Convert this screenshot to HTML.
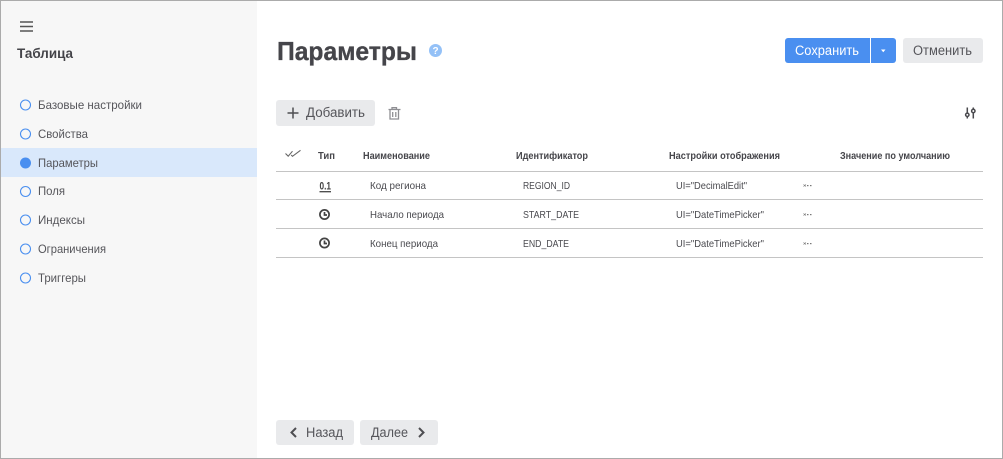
<!DOCTYPE html>
<html><head><meta charset="utf-8"><title>Параметры</title>
<style>
html,body{margin:0;padding:0;background:#fff;width:1003px;height:459px;overflow:hidden}
svg{display:block}
text{font-family:"Liberation Sans",sans-serif;fill:#4a4a4f}
.n{font-size:12px;fill:#55555a}
.c{font-size:10.5px;fill:#4a4a4f}
.h{font-size:10.5px;font-weight:bold;fill:#46464b}
.b{font-size:13.5px;fill:#55555a}
</style></head><body>
<svg width="1003" height="459" viewBox="0 0 1003 459" xmlns="http://www.w3.org/2000/svg">
<rect width="1003" height="459" fill="#fff"/>
<rect x="1" y="1" width="256" height="457" fill="#f7f7f7"/>
<rect x="1" y="148" width="256" height="29" fill="#d9e8fb"/>
<rect x="0.5" y="0.5" width="1002" height="458" fill="none" stroke="#ababab"/>
<!-- hamburger -->
<path d="M20 22h13M20 26.500h13M20 31h13" stroke="#555" stroke-width="1.500" fill="none"/>
<text x="17" y="58" textLength="56" lengthAdjust="spacingAndGlyphs" style="font-size:14px;font-weight:bold;fill:#444449">Таблица</text>
<!-- nav -->
<g fill="none" stroke="#4a8ff0" stroke-width="1.100">
<circle cx="25.500" cy="105" r="5"/><circle cx="25.500" cy="134" r="5"/>
<circle cx="25.500" cy="191.500" r="5"/><circle cx="25.500" cy="220" r="5"/>
<circle cx="25.500" cy="249" r="5"/><circle cx="25.500" cy="278" r="5"/>
</g>
<circle cx="25.500" cy="163" r="5.500" fill="#4a8ff0"/>
<text class="n" x="38" y="109" textLength="104" lengthAdjust="spacingAndGlyphs">Базовые настройки</text>
<text class="n" x="38" y="138" textLength="50" lengthAdjust="spacingAndGlyphs">Свойства</text>
<text class="n" x="38" y="167" textLength="60" lengthAdjust="spacingAndGlyphs">Параметры</text>
<text class="n" x="38" y="195" textLength="27" lengthAdjust="spacingAndGlyphs">Поля</text>
<text class="n" x="38" y="224" textLength="47" lengthAdjust="spacingAndGlyphs">Индексы</text>
<text class="n" x="38" y="253" textLength="68" lengthAdjust="spacingAndGlyphs">Ограничения</text>
<text class="n" x="38" y="282" textLength="48" lengthAdjust="spacingAndGlyphs">Триггеры</text>
<!-- title -->
<text x="277" y="60" textLength="140" lengthAdjust="spacingAndGlyphs" style="font-size:26px;font-weight:bold;fill:#45454a;stroke:#45454a;stroke-width:.35">Параметры</text>
<circle cx="435.500" cy="50.500" r="6.500" fill="#94c1f7"/>
<text x="435.500" y="54" text-anchor="middle" style="font-size:10px;font-weight:bold;fill:#fff">?</text>
<!-- top buttons -->
<path d="M788 38h82v25h-82a3 3 0 0 1-3-3v-19a3 3 0 0 1 3-3z" fill="#4a8ff0"/>
<path d="M871 38h22a3 3 0 0 1 3 3v19a3 3 0 0 1-3 3h-22z" fill="#4a8ff0"/>
<text x="795" y="55" textLength="64" lengthAdjust="spacingAndGlyphs" style="font-size:13.500px;fill:#fff">Сохранить</text>
<path d="M881 49.500h4.500l-2.250 2.700z" fill="#fff"/>
<rect x="903" y="38" width="80" height="25" rx="3" fill="#e9eaec"/>
<text class="b" x="913" y="55" textLength="59" lengthAdjust="spacingAndGlyphs">Отменить</text>
<!-- toolbar -->
<rect x="276" y="100" width="99" height="26" rx="3" fill="#e9eaec"/>
<path d="M293 107.500v11M287.500 113h11" stroke="#4e4e52" stroke-width="1.500" fill="none"/>
<text class="b" x="306" y="117" textLength="59" lengthAdjust="spacingAndGlyphs">Добавить</text>
<g fill="none" stroke="#8f8f93" stroke-width="1.300">
<path d="M388.500 109.500h12M392 109.500v-1.800h4.500v1.800M390 109.500v9.500h8.500v-9.500M392.700 112v5M395.800 112v5"/>
</g>
<g fill="none" stroke="#4a4a4e">
<path d="M967.300 107.500v11M973.300 107.500v11" stroke-width="1.500"/>
<circle cx="967.300" cy="114.800" r="1.700" fill="#fff" stroke-width="1.500"/>
<circle cx="973.300" cy="111" r="1.700" fill="#fff" stroke-width="1.500"/>
</g>
<!-- table header -->
<path d="M285.500 153.500l2.700 2.700 4.300-5M291.200 155l1.300 1.300 8-6" fill="none" stroke="#666" stroke-width="1.100"/>
<text class="h" x="318" y="159" textLength="17" lengthAdjust="spacingAndGlyphs">Тип</text>
<text class="h" x="363" y="159" textLength="67" lengthAdjust="spacingAndGlyphs">Наименование</text>
<text class="h" x="516" y="159" textLength="72" lengthAdjust="spacingAndGlyphs">Идентификатор</text>
<text class="h" x="669" y="159" textLength="111" lengthAdjust="spacingAndGlyphs">Настройки отображения</text>
<text class="h" x="840" y="159" textLength="110" lengthAdjust="spacingAndGlyphs">Значение по умолчанию</text>
<path d="M276 171.500h707M276 199.500h707M276 228.500h707M276 257.500h707" stroke="#c4c4c4" stroke-width="1" fill="none"/>
<!-- rows -->
<text x="319.500" y="189.500" textLength="11.500" lengthAdjust="spacingAndGlyphs" style="font-size:11px;font-weight:bold;fill:#444">0.1</text>
<path d="M319.500 191.700h11.500" stroke="#444" stroke-width="1.300"/>
<g fill="none" stroke="#444" stroke-width="1.700">
<circle cx="324.500" cy="214.500" r="4.600"/><path d="M324.500 212v3h2.500"/>
<circle cx="324.500" cy="243" r="4.600"/><path d="M324.500 240.500v3h2.500"/>
</g>
<text class="c" x="370" y="189" textLength="56" lengthAdjust="spacingAndGlyphs">Код региона</text>
<text class="c" x="370" y="218" textLength="74" lengthAdjust="spacingAndGlyphs">Начало периода</text>
<text class="c" x="370" y="247" textLength="68" lengthAdjust="spacingAndGlyphs">Конец периода</text>
<text class="c" x="523" y="189" textLength="47" lengthAdjust="spacingAndGlyphs">REGION_ID</text>
<text class="c" x="523" y="218" textLength="56" lengthAdjust="spacingAndGlyphs">START_DATE</text>
<text class="c" x="523" y="247" textLength="46" lengthAdjust="spacingAndGlyphs">END_DATE</text>
<text class="c" x="676" y="189" textLength="71" lengthAdjust="spacingAndGlyphs">UI="DecimalEdit"</text>
<text class="c" x="676" y="218" textLength="88" lengthAdjust="spacingAndGlyphs">UI="DateTimePicker"</text>
<text class="c" x="676" y="247" textLength="88" lengthAdjust="spacingAndGlyphs">UI="DateTimePicker"</text>
<g fill="#777">
<path d="M803.500 184.500l2.500 2M806 184.500l-2.500 2M803.500 213.500l2.500 2M806 213.500l-2.500 2M803.500 242.500l2.500 2M806 242.500l-2.500 2" stroke="#777" stroke-width=".7"/>
<rect x="807" y="185" width="1.500" height="1.200"/><rect x="810" y="185" width="1.500" height="1.200"/>
<rect x="807" y="214" width="1.500" height="1.200"/><rect x="810" y="214" width="1.500" height="1.200"/>
<rect x="807" y="243" width="1.500" height="1.200"/><rect x="810" y="243" width="1.500" height="1.200"/>
</g>
<!-- bottom buttons -->
<rect x="276" y="420" width="78" height="25" rx="3" fill="#e9eaec"/>
<path d="M296 428l-4.500 4.500 4.500 4.500" fill="none" stroke="#4e4e52" stroke-width="2"/>
<text class="b" x="306" y="437" textLength="37" lengthAdjust="spacingAndGlyphs">Назад</text>
<rect x="360" y="420" width="78" height="25" rx="3" fill="#e9eaec"/>
<text class="b" x="371" y="437" textLength="37" lengthAdjust="spacingAndGlyphs">Далее</text>
<path d="M419 428l4.500 4.500-4.500 4.500" fill="none" stroke="#4e4e52" stroke-width="2"/>
</svg>
</body></html>
